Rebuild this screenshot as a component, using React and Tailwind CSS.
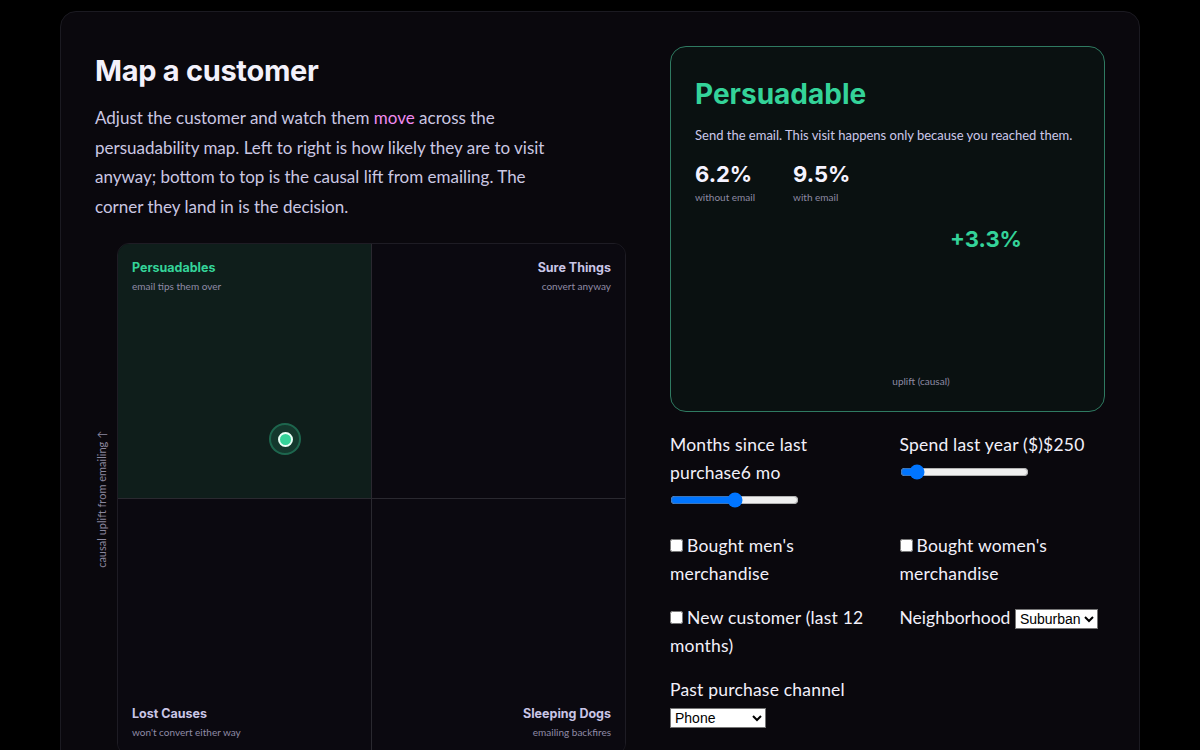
import { useState } from 'react';

const body = { fontFamily: 'Lato, "Noto Sans", sans-serif' };

function Quadrant({ title, sub, align, tone, pos }) {
  return (
    <div
      className={`flex flex-col p-[14px] ${pos} ${align === 'right' ? 'items-end text-right' : 'items-start'} ${
        tone === 'green' ? 'bg-[#0f1e1b]' : 'bg-[#0b0910]'
      }`}
    >
      <div
        className={`text-[12.5px] font-bold leading-5 ${tone === 'green' ? 'text-[#34d399]' : 'text-[#c9c5e6]'}`}
        style={{ fontFamily: 'Inter, sans-serif' }}
      >
        {title}
      </div>
      <div className="text-[10px] leading-4 text-[#8f8ba6]">{sub}</div>
    </div>
  );
}

function UpliftChart() {
  return (
    <svg viewBox="0 0 385 180" className="mt-3 h-[180px] w-full">
      <text
        x="291"
        y="32"
        textAnchor="middle"
        fill="#34d399"
        fontSize="22"
        fontWeight="700"
        fontFamily="Inter, sans-serif"
      >
        +3.3%
      </text>
      <text x="226" y="170" textAnchor="middle" fill="#8d8aa3" fontSize="10" fontFamily="Lato, sans-serif">
        uplift (causal)
      </text>
    </svg>
  );
}

export default function App() {
  const [months, setMonths] = useState(6);
  const [spend, setSpend] = useState(250);
  const [mens, setMens] = useState(false);
  const [womens, setWomens] = useState(false);
  const [newbie, setNewbie] = useState(false);
  const [hood, setHood] = useState('Suburban');
  const [channel, setChannel] = useState('Phone');

  return (
    <div className="min-h-screen bg-black px-[60px] pt-[11px] pb-10" style={body}>
      <div className="rounded-2xl border border-[#1b1a21] bg-[#0a080d] px-[34px] pt-[34px] pb-10">
        <div className="grid grid-cols-[531px_435px] gap-x-[44px]">
          {/* Left: map */}
          <div>
            <h2
              className="text-[29px] font-bold leading-[50px] tracking-[-0.3px] text-[#f3f1fb]"
              style={{ fontFamily: 'Inter, sans-serif' }}
            >
              Map a customer
            </h2>
            <p className="mt-[7px] max-w-[462px] text-[17px] leading-[29.5px] text-[#cbc7e2]">
              Adjust the customer and watch them <span className="text-[#f08cf0]">move</span> across the
              persuadability map. Left to right is how likely they are to visit anyway; bottom to top is the
              causal lift from emailing. The corner they land in is the decision.
            </p>

            <div className="mt-[22px] flex">
              <div className="mr-[6px] flex w-[16px] items-center justify-center">
                <span className="-rotate-90 whitespace-nowrap text-[11px] text-[#8a879e]">
                  causal uplift from emailing ↑
                </span>
              </div>
              <div className="relative grid h-[512px] w-[509px] grid-cols-2 grid-rows-2 overflow-hidden rounded-xl border border-[#1e1c24]">
                <Quadrant
                  title="Persuadables"
                  sub="email tips them over"
                  tone="green"
                  pos="border-r border-b border-[#2a2930]"
                />
                <Quadrant title="Sure Things" sub="convert anyway" align="right" pos="border-b border-[#2a2930]" />
                <Quadrant
                  title="Lost Causes"
                  sub="won't convert either way"
                  pos="justify-end border-r border-[#2a2930]"
                />
                <Quadrant title="Sleeping Dogs" sub="emailing backfires" align="right" pos="justify-end" />

                <div className="absolute left-[33%] top-[38.3%] flex h-[32px] w-[32px] -translate-x-1/2 -translate-y-1/2 items-center justify-center rounded-full border-2 border-[#34d399]/30 bg-[#34d399]/15">
                  <div className="h-[15px] w-[15px] rounded-full border-2 border-[#e9fff6] bg-[#34d399]" />
                </div>
              </div>
            </div>
          </div>

          {/* Right: verdict + controls */}
          <div>
            <div className="h-[366px] rounded-2xl border border-[#2f7a61] bg-[#0a1111] px-[24px] pt-[29px]">
              <div
                className="text-[28px] font-bold leading-9 text-[#34d399]"
                style={{ fontFamily: 'Inter, sans-serif' }}
              >
                Persuadable
              </div>
              <p className="mt-[13px] text-[13px] leading-5 text-[#ccc8ea]">
                Send the email. This visit happens only because you reached them.
              </p>
              <div className="mt-[15px] flex gap-[38px]">
                <div>
                  <div
                    className="text-[22px] font-bold leading-7 text-[#f5f3ff]"
                    style={{ fontFamily: 'Inter, sans-serif' }}
                  >
                    6.2%
                  </div>
                  <div className="mt-[3px] text-[10px] leading-3 text-[#8d8aa3]">without email</div>
                </div>
                <div>
                  <div
                    className="text-[22px] font-bold leading-7 text-[#f5f3ff]"
                    style={{ fontFamily: 'Inter, sans-serif' }}
                  >
                    9.5%
                  </div>
                  <div className="mt-[3px] text-[10px] leading-3 text-[#8d8aa3]">with email</div>
                </div>
              </div>
              <UpliftChart />
            </div>

            <div className="mt-[19px] grid grid-cols-2 gap-x-6 gap-y-4 text-[17.5px] leading-7 tracking-[0.2px] text-[#f2f0fa]">
              <label className="block">
                Months since last purchase
                <span>{months} mo</span>
                <input
                  type="range"
                  min="0"
                  max="12"
                  value={months}
                  onChange={(e) => setMonths(+e.target.value)}
                  className="mt-[5px] mb-[8px] block"
                />
              </label>
              <label className="block">
                Spend last year ($)
                <span>${spend}</span>
                <input
                  type="range"
                  min="0"
                  max="3000"
                  value={spend}
                  onChange={(e) => setSpend(+e.target.value)}
                  className="mt-[5px] block"
                />
              </label>

              <label className="block">
                <input type="checkbox" checked={mens} onChange={(e) => setMens(e.target.checked)} className="mr-1" />
                Bought men's merchandise
              </label>
              <label className="block">
                <input
                  type="checkbox"
                  checked={womens}
                  onChange={(e) => setWomens(e.target.checked)}
                  className="mr-1"
                />
                Bought women's merchandise
              </label>

              <label className="block">
                <input
                  type="checkbox"
                  checked={newbie}
                  onChange={(e) => setNewbie(e.target.checked)}
                  className="mr-1"
                />
                New customer (last 12 months)
              </label>
              <label className="block tracking-[0px]">
                Neighborhood{' '}
                <select
                  value={hood}
                  onChange={(e) => setHood(e.target.value)}
                  className="border border-[#767676] bg-white text-[14px] leading-4 tracking-normal text-black"
                  style={{ fontFamily: 'Arial, "Liberation Sans", sans-serif' }}
                >
                  <option>Suburban</option>
                  <option>Urban</option>
                  <option>Rural</option>
                </select>
              </label>

              <label className="block">
                Past purchase channel
                <select
                  value={channel}
                  onChange={(e) => setChannel(e.target.value)}
                  className="mt-[4px] block w-[96px] border border-[#767676] bg-white text-[14px] leading-4 tracking-normal text-black"
                  style={{ fontFamily: 'Arial, "Liberation Sans", sans-serif' }}
                >
                  <option>Phone</option>
                  <option>Web</option>
                  <option>Multichannel</option>
                </select>
              </label>
            </div>
          </div>
        </div>
      </div>
    </div>
  );
}
